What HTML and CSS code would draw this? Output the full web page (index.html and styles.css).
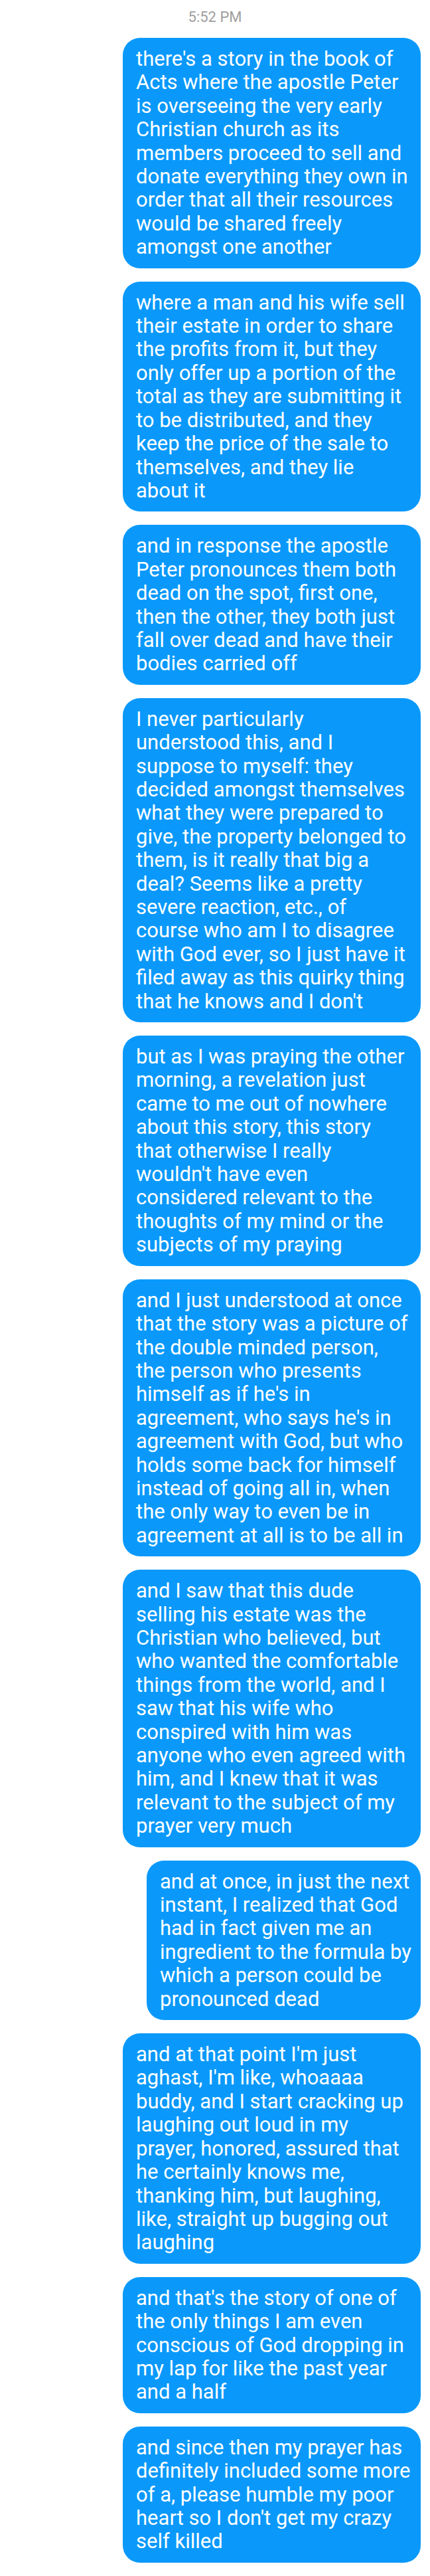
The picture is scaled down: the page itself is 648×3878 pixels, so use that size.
FILE: index.html
```html
<!DOCTYPE html>
<html lang="en">
<head>
<meta charset="utf-8">
<title>Messages</title>
<link rel="stylesheet" href="styles.css">
</head>
<body>
<main class="thread">
  <div class="time">5:52 PM</div>

  <p class="bubble">there's a story in the book of<br>Acts where the apostle Peter<br>is overseeing the very early<br>Christian church as its<br>members proceed to sell and<br>donate everything they own in<br>order that all their resources<br>would be shared freely<br>amongst one another</p>

  <p class="bubble">where a man and his wife sell<br>their estate in order to share<br>the profits from it, but they<br>only offer up a portion of the<br>total as they are submitting it<br>to be distributed, and they<br>keep the price of the sale to<br>themselves, and they lie<br>about it</p>

  <p class="bubble">and in response the apostle<br>Peter pronounces them both<br>dead on the spot, first one,<br>then the other, they both just<br>fall over dead and have their<br>bodies carried off</p>

  <p class="bubble">I never particularly<br>understood this, and I<br>suppose to myself: they<br>decided amongst themselves<br>what they were prepared to<br>give, the property belonged to<br>them, is it really that big a<br>deal? Seems like a pretty<br>severe reaction, etc., of<br>course who am I to disagree<br>with God ever, so I just have it<br>filed away as this quirky thing<br>that he knows and I don't</p>

  <p class="bubble">but as I was praying the other<br>morning, a revelation just<br>came to me out of nowhere<br>about this story, this story<br>that otherwise I really<br>wouldn't have even<br>considered relevant to the<br>thoughts of my mind or the<br>subjects of my praying</p>

  <p class="bubble">and I just understood at once<br>that the story was a picture of<br>the double minded person,<br>the person who presents<br>himself as if he's in<br>agreement, who says he's in<br>agreement with God, but who<br>holds some back for himself<br>instead of going all in, when<br>the only way to even be in<br>agreement at all is to be all in</p>

  <p class="bubble">and I saw that this dude<br>selling his estate was the<br>Christian who believed, but<br>who wanted the comfortable<br>things from the world, and I<br>saw that his wife who<br>conspired with him was<br>anyone who even agreed with<br>him, and I knew that it was<br>relevant to the subject of my<br>prayer very much</p>

  <p class="bubble bubble-narrow">and at once, in just the next<br>instant, I realized that God<br>had in fact given me an<br>ingredient to the formula by<br>which a person could be<br>pronounced dead</p>

  <p class="bubble">and at that point I'm just<br>aghast, I'm like, whoaaaa<br>buddy, and I start cracking up<br>laughing out loud in my<br>prayer, honored, assured that<br>he certainly knows me,<br>thanking him, but laughing,<br>like, straight up bugging out<br>laughing</p>

  <p class="bubble">and that's the story of one of<br>the only things I am even<br>conscious of God dropping in<br>my lap for like the past year<br>and a half</p>

  <p class="bubble">and since then my prayer has<br>definitely included some more<br>of a, please humble my poor<br>heart so I don't get my crazy<br>self killed</p>
</main>
</body>
</html>
```

FILE: styles.css
```css
html, body {
  margin: 0;
  padding: 0;
  background: #ffffff;
}

body {
  font-family: Roboto, "Noto Sans", "Liberation Sans", sans-serif;
}

.thread {
  display: flex;
  flex-direction: column;
  align-items: flex-end;
  gap: 20px;
  padding: 12.5px 14px 22px;
  min-height: 3878px;
  box-sizing: border-box;
}

.time {
  align-self: center;
  font-size: 22px;
  line-height: 26px;
  color: #9e9e9e;
  margin-bottom: -1.5px;
}

.bubble {
  margin: 0;
  width: 449px;
  box-sizing: border-box;
  padding: 14px 20px;
  background: #0a99fb;
  color: #ffffff;
  border-radius: 26px;
  font-size: 31px;
  line-height: 35.4px;
  white-space: nowrap;
}

.bubble-narrow {
  width: 413px;
}
```
